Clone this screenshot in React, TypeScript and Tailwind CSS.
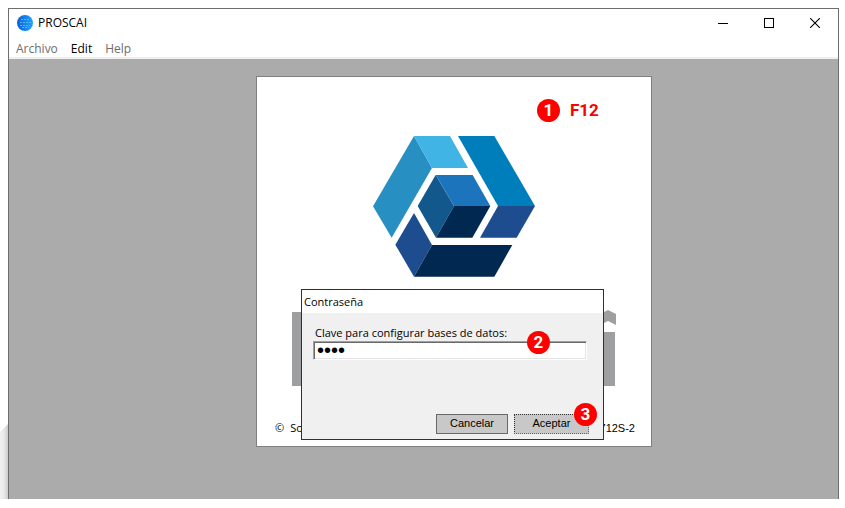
import { useState, type ReactNode } from "react";

function GlobeIcon() {
  return (
    <svg className="size-4 shrink-0" viewBox="0 0 16 16" aria-hidden="true">
      <defs>
        <linearGradient id="globe" x1="0" y1="0" x2="1" y2="0">
          <stop offset="0" stopColor="#0b5fe0" />
          <stop offset="1" stopColor="#1ea5f5" />
        </linearGradient>
      </defs>
      <circle cx="8" cy="8" r="8" fill="url(#globe)" />
      <g stroke="#5fb0f8" strokeWidth="1" strokeDasharray="2 1" fill="none">
        <path d="M4 4.5h9M3 7.5h11M3 10.5h10M5 12.5h7" />
      </g>
    </svg>
  );
}

function HexLogo() {
  return (
    <svg className="h-[141px] w-[162px]" viewBox="24 33 486 423" role="img" aria-label="Proscai">
      <path fill="#288fc3" d="M147 33L201 129L80 338L24 244Z" />
      <path fill="#41b4e6" d="M147 33H255L309 129H201Z" />
      <path fill="#007dbb" d="M279 33H388L510 243H399Z" />
      <path fill="#1e4d8f" d="M399 243H510L455 338H345Z" />
      <path fill="#13588c" d="M212 150L267 243L213 338L158 243Z" />
      <path fill="#1c75bc" d="M212 150H323L376 243H267Z" />
      <path fill="#002850" d="M267 243H376L322 338H213Z" />
      <path fill="#1e4d8f" d="M147 264L201 360L147 455L91 359Z" />
      <path fill="#002850" d="M201 360H442L388 455H147Z" />
    </svg>
  );
}

function Wordmark() {
  return (
    <svg className="h-[76px] w-[324px]" viewBox="0 0 324 76" aria-hidden="true">
      <g fill="#9e9fa1">
        <path d="M0 2H20V76H0Z" />
        <path d="M303 22H323V76H303Z" />
        <path d="M308 4L316 0L324 4V15L316 11L308 15Z" />
      </g>
    </svg>
  );
}

function Badge({ children }: { children: ReactNode }) {
  return (
    <span className="flex size-[23px] items-center justify-center rounded-full bg-[#fe0000] font-[Roboto,sans-serif] text-[17px] leading-none font-bold text-white">
      {children}
    </span>
  );
}

function PasswordDialog() {
  const [password, setPassword] = useState("1234");
  return (
    <form
      role="dialog"
      aria-labelledby="dialog-title"
      onSubmit={(e) => e.preventDefault()}
      className="absolute top-[212px] left-11 flex h-[151px] w-[303px] flex-col border border-[#003c74] bg-[#f0f0f0]"
    >
      <h2 id="dialog-title" className="h-[23px] bg-white px-0.5 text-[11px] leading-6">
        Contraseña
      </h2>
      <div className="relative flex flex-col px-[11px] pt-3">
        <label htmlFor="password" className="h-4 pl-0.5 text-[11px] leading-4">
          Clave para configurar bases de datos:
        </label>
        <input
          id="password"
          type="password"
          value={password}
          onChange={(e) => setPassword(e.target.value)}
          className="h-[19px] w-[274px] border border-t-[#a0a0a0] border-r-white border-b-white border-l-[#a0a0a0] bg-white px-[3px] font-['Liberation_Sans',Arial,sans-serif] text-xl leading-4 shadow-[inset_1px_1px_#696969,inset_-1px_-1px_#e3e3e3] outline-none"
        />
        <div className="absolute top-[18px] left-[225px]">
          <Badge>2</Badge>
        </div>
      </div>
      <div className="relative mt-auto flex justify-end gap-1.5 pr-3.5 pb-[5px] font-['Liberation_Sans',Arial,sans-serif] text-[11px]">
        <button type="button" className="h-5 w-[72px] border border-[#696969] bg-[#c8c8c8] pb-0.5 leading-4">
          Cancelar
        </button>
        <button
          type="submit"
          className="h-5 w-[75px] border border-dotted border-[#333333] border-r-[#696969] border-b-[#696969] bg-[#c8c8c8] pb-0.5 leading-4"
        >
          Aceptar
        </button>
        <div className="absolute -top-[11px] right-1.5">
          <Badge>3</Badge>
        </div>
      </div>
    </form>
  );
}

function Splash() {
  return (
    <section className="relative flex h-[371px] w-[396px] shrink-0 flex-col items-center border border-[#808080] bg-white pt-[59px]">
      <HexLogo />
      <div className="mt-[33px]">
        <Wordmark />
      </div>
      <div className="mt-[34px] flex w-full items-center justify-between pr-4 pl-[18px] text-[11px] leading-4">
        <span className="flex gap-1.5">
          <span>©</span>
          <span>So</span>
        </span>
        <span className="font-['Liberation_Sans',Arial,sans-serif]">712S-2</span>
      </div>
      <div className="absolute top-[22px] left-[280px] flex items-center gap-2.5 font-[Roboto,sans-serif] text-[17px] leading-none font-bold text-[#fe0000]">
        <Badge>1</Badge>
        <span>F12</span>
      </div>
      <PasswordDialog />
    </section>
  );
}

function TitleBar() {
  return (
    <header className="flex h-7 items-center gap-[5px] bg-white pl-2">
      <GlobeIcon />
      <h1 className="flex-1 text-xs">PROSCAI</h1>
      <div className="flex h-full">
        <button type="button" aria-label="Minimizar" className="flex w-[46px] items-center justify-center">
          <svg className="size-2.5" viewBox="0 0 10 10" shapeRendering="crispEdges">
            <path d="M0 5.5H10" stroke="#000" />
          </svg>
        </button>
        <button type="button" aria-label="Maximizar" className="flex w-[46px] items-center justify-center">
          <svg className="size-2.5" viewBox="0 0 10 10" shapeRendering="crispEdges">
            <path d="M.5 .5H9.5V9.5H.5Z" fill="none" stroke="#000" />
          </svg>
        </button>
        <button type="button" aria-label="Cerrar" className="flex w-[46px] items-center justify-center">
          <svg className="size-2.5" viewBox="0 0 10 10">
            <path d="M0 0L10 10M10 0L0 10" stroke="#000" strokeWidth="1.1" />
          </svg>
        </button>
      </div>
    </header>
  );
}

export default function App() {
  return (
    <div className="flex h-screen bg-white pt-2 pb-[9px] font-['Open_Sans','Noto_Sans',sans-serif] text-black">
      <div className="flex w-2 shrink-0 flex-col justify-end">
        <div className="h-[75px] bg-linear-to-r from-[#f2f2f2] via-[#e9e9e9] to-[#cccccc] [clip-path:polygon(0_8px,100%_0,100%_100%,0_100%)]" />
      </div>
      <div className="mr-1.5 flex min-w-0 flex-1 flex-col border border-b-0 border-[#6e6e6e]">
        <TitleBar />
        <nav className="flex h-5 items-center gap-[13px] bg-white pt-1 pl-[7px] text-xs">
          <button type="button" className="text-[#6d6d6d]">Archivo</button>
          <button type="button">Edit</button>
          <button type="button" className="text-[#6d6d6d]">Help</button>
        </nav>
        <main className="flex flex-1 justify-center border-t-2 border-[#f0f0f0] bg-[#ababab] pt-[17px] pl-[61px]">
          <Splash />
        </main>
      </div>
    </div>
  );
}
